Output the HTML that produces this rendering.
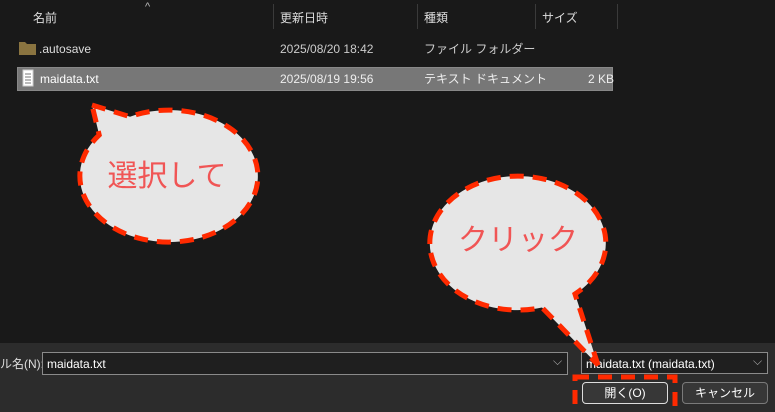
<!DOCTYPE html>
<html><head><meta charset="utf-8"><style>
body{margin:0;width:775px;height:412px;overflow:hidden;background:#191919;font-family:"Liberation Sans","Noto Sans CJK JP",sans-serif;color:#fff;font-size:12px;position:relative}
.a{position:absolute;white-space:nowrap;line-height:14px}
.sep{position:absolute;top:4px;width:1px;height:25px;background:#3a3a3a}
.panel{position:absolute;left:0;top:343px;width:775px;height:69px;background:#2c2c2c}
.box{position:absolute;border:1px solid #8a8a8a;background:#1f1f1f;box-sizing:border-box}
.btn{position:absolute;border:1px solid #7a7a7a;background:#373737;border-radius:4px;box-sizing:border-box;text-align:center;line-height:20px}
</style></head><body>
<div class="a" style="left:33px;top:11px;color:#ddd">名前</div>
<div class="a" style="left:145px;top:0px;color:#bbb;font-size:11px">^</div>
<div class="sep" style="left:273px"></div>
<div class="a" style="left:280px;top:11px;color:#ddd">更新日時</div>
<div class="sep" style="left:417px"></div>
<div class="a" style="left:424px;top:11px;color:#ddd">種類</div>
<div class="sep" style="left:535px"></div>
<div class="a" style="left:542px;top:11px;color:#ddd">サイズ</div>
<div class="sep" style="left:617px"></div>
<svg class="a" style="left:19px;top:41px" width="18" height="14"><path d="M0 1h6l2 2h9v11H0z" fill="#8a7440"/></svg>
<div class="a" style="left:39px;top:42px;color:#ddd">.autosave</div>
<div class="a" style="left:280px;top:42px;color:#ccc">2025/08/20 18:42</div>
<div class="a" style="left:424px;top:42px;color:#ccc">ファイル フォルダー</div>
<div class="a" style="left:17px;top:67px;width:596px;height:24px;background:#777;border:1px solid #888;box-sizing:border-box"></div>
<svg class="a" style="left:22px;top:69px" width="12" height="18"><rect x="1" y="1" width="10" height="16" fill="#fff" stroke="#ccc"/><path d="M3 5h6M3 8h6M3 11h6M3 14h6" stroke="#777"/></svg>
<div class="a" style="left:40px;top:72px;color:#fff">maidata.txt</div>
<div class="a" style="left:280px;top:72px;color:#eee">2025/08/19 19:56</div>
<div class="a" style="left:424px;top:72px;color:#eee">テキスト ドキュメント</div>
<div class="a" style="left:588px;top:72px;color:#eee">2 KB</div>
<div class="panel"></div>
<div class="a" style="left:0;top:357px;color:#ddd">ル名(N):</div>
<div class="box" style="left:42px;top:352px;width:526px;height:23px"></div>
<div class="a" style="left:47px;top:357px">maidata.txt</div>
<div class="a" style="left:553px;top:354px;color:#aaa">⌵</div>
<div class="box" style="left:581px;top:352px;width:187px;height:22px"></div>
<div class="a" style="left:586px;top:357px">maidata.txt (maidata.txt)</div>
<div class="a" style="left:753px;top:354px;color:#aaa">⌵</div>
<div class="btn" style="left:582px;top:382px;width:86px;height:22px;border-color:#ddd">開く(O)</div>
<div class="btn" style="left:682px;top:382px;width:86px;height:22px">キャンセル</div>
<svg class="a" style="left:0;top:0" width="775" height="412">
<g stroke="#ff2a00" stroke-width="5" stroke-dasharray="14 9" fill="#e6e6e6">
<path d="M92 105 L130 116.7 A89 66 0 1 1 99.2 135 Z"/>
<path d="M598 365 L575 294 A88 67 0 1 0 542 307.5 Z"/>
<rect x="575" y="377" width="100" height="40" fill="none"/>
</g>
<text x="167" y="186" font-size="30" fill="#f05555" text-anchor="middle" font-family="Noto Sans CJK JP,sans-serif">選択して</text>
<text x="518" y="250" font-size="30" fill="#f05555" text-anchor="middle" font-family="Noto Sans CJK JP,sans-serif">クリック</text>
</svg>
</body></html>
